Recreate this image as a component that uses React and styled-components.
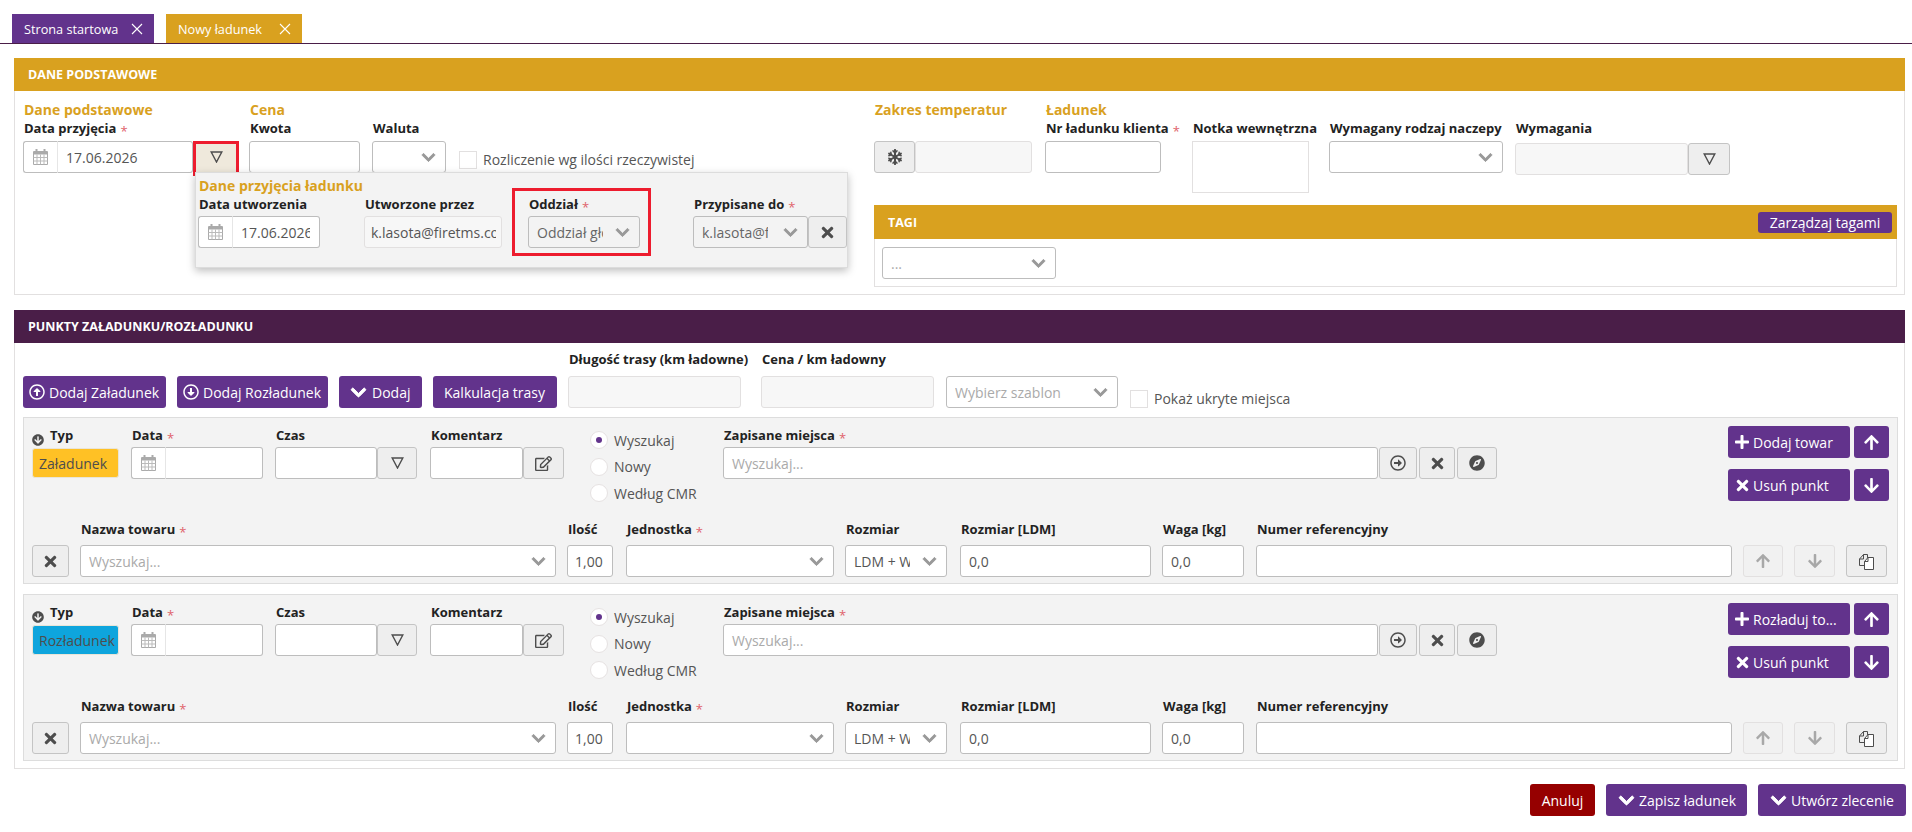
import styled, { createGlobalStyle } from 'styled-components';
import {
  FaArrowCircleDown,
  FaArrowDown,
  FaArrowUp,
  FaChevronDown,
  FaCompass,
  FaPlus,
  FaRegArrowAltCircleDown,
  FaRegArrowAltCircleRight,
  FaRegArrowAltCircleUp,
  FaRegEdit,
  FaSnowflake,
  FaTimes,
} from 'react-icons/fa';

const PURPLE = '#62338c';
const GOLD = '#d9a11f';

const GlobalStyle = createGlobalStyle`
  html, body {
    margin: 0;
    background: #fff;
    font-family: 'Open Sans', sans-serif;
    font-size: 14px;
    color: #333;
  }
  * { box-sizing: border-box; }
`;

const Page = styled.div`
  width: 1912px;
  height: 832px;
  overflow: hidden;
  padding-top: 14px;
`;

const TabBar = styled.div`
  display: flex;
  height: 30px;
  gap: 12px;
  padding-left: 12px;
  border-bottom: 1px solid #4a1e48;
`;

const Tab = styled.div`
  display: flex;
  align-items: center;
  justify-content: space-between;
  width: ${(p) => p.$w}px;
  height: 29px;
  padding: 0 11px 0 12px;
  background: ${(p) => p.$bg};
  color: #fff;
  font-size: 12.7px;
`;

const Panel = styled.section`
  margin: ${(p) => p.$mt}px 7px 0 14px;
  border: 1px solid #e2e0e0;
  border-top: 0;
  height: ${(p) => p.$h}px;
`;

const PanelHead = styled.h2`
  display: flex;
  align-items: center;
  justify-content: space-between;
  margin: 0 -1px;
  height: ${(p) => p.$h || 33}px;
  padding: 0 5px 0 14px;
  background: ${(p) => p.$bg};
  color: #fff;
  font-size: 12.5px;
  font-weight: 700;
`;

const TopBody = styled.div`
  display: flex;
  align-items: flex-start;
  position: relative;
  padding: 10px 7px 0 8px;
`;

const Block = styled.div`
  flex: none;
  margin-left: ${(p) => p.$ml || 0}px;
  width: ${(p) => p.$w}px;
`;

const RightBlock = styled(Block)`
  margin-left: auto;
`;

const Row = styled.div`
  display: flex;
  align-items: ${(p) => p.$align || 'flex-start'};
  margin-top: ${(p) => p.$mt || 0}px;
`;

const GroupTitle = styled.div`
  color: ${GOLD};
  font-size: 14px;
  font-weight: 700;
  line-height: 18px;
  height: 18px;
  margin-left: 1px;
`;

const Field = styled.div`
  flex: none;
  width: ${(p) => p.$w}px;
  margin-left: ${(p) => p.$ml || 0}px;
  margin-top: ${(p) => p.$mt || 0}px;
`;

const Label = styled.label`
  display: block;
  height: ${(p) => p.$h || 21}px;
  margin-left: 1px;
  color: #222;
  font-size: 13px;
  font-weight: 700;
  line-height: 18px;
  white-space: nowrap;
  ${(p) => p.$required && `
    &::after {
      content: '*';
      display: inline-block;
      margin-left: 4px;
      color: #e0636b;
      font-weight: 400;
      font-size: 13px;
      transform: translateY(3px);
    }
  `}
`;

const InputGroup = styled.div`
  display: flex;
  height: 32px;
  width: 100%;
`;

const Input = styled.div`
  display: flex;
  align-items: center;
  flex: 1;
  min-width: 0;
  height: 32px;
  padding: 0 ${(p) => p.$pr ?? 7}px 0 ${(p) => p.$pl ?? 8}px;
  overflow: hidden;
  white-space: nowrap;
  background: ${(p) => (p.$disabled ? '#f7f7f7' : '#fff')};
  border: 1px solid ${(p) => (p.$disabled ? '#e2e0e0' : '#bdbdbd')};
  border-radius: 3px;
  font-size: 14px;
  color: #555;
`;

const Area = styled.div`
  width: 100%;
  height: 52px;
  background: #fff;
  border: 1px solid #e2e0e0;
`;

const Addon = styled.div`
  display: flex;
  flex: none;
  align-items: center;
  justify-content: center;
  width: 35px;
  height: 100%;
  background: #fff;
  border: 1px solid #bdbdbd;
  border-right-color: #e6e6e6;
  border-radius: 3px 0 0 3px;
`;

const GroupInput = styled(Input)`
  height: 100%;
  border-left: 0;
  border-radius: 0 3px 3px 0;
`;

const SelectBox = styled(Input)`
  justify-content: space-between;
  background: ${(p) => (p.$muted ? '#f3f3f3' : '#fff')};
  color: ${(p) => (p.$muted ? '#666' : '#555')};
`;

const Clip = styled.span`
  display: block;
  overflow: hidden;
  min-width: 0;
  width: ${(p) => (p.$w ? `${p.$w}px` : 'auto')};
`;

const Placeholder = styled.span`
  color: #aaa;
`;

const Caret = styled(FaChevronDown)`
  flex: none;
  color: #999;
  font-size: 15px;
  margin-right: 2px;
  stroke: currentColor;
  stroke-width: 30;
`;

const IconButton = styled.div`
  display: flex;
  flex: none;
  align-items: center;
  justify-content: center;
  width: ${(p) => p.$w || 40}px;
  height: 32px;
  margin-left: ${(p) => p.$ml || 0}px;
  background: ${(p) => (p.$disabled ? '#f1f1f1' : '#eeeeee')};
  border: 1px solid ${(p) => (p.$disabled ? '#e2e0e0' : '#c4c4c4')};
  border-radius: 3px;
  color: ${(p) => (p.$disabled ? '#a8a8a8' : '#4d4d4d')};
  font-size: ${(p) => p.$fs || 16}px;
`;

const FlagButton = styled(IconButton)`
  position: relative;
  background: #efe9dc;
  &::after {
    content: '';
    position: absolute;
    inset: -1px -1px -4px -1px;
    border: 3px solid #ed1c2e;
  }
`;

const TriangleIcon = () => (
  <svg width="13" height="12" viewBox="0 0 13 12">
    <path d="M1.2 1h10.6L6.5 11z" fill="none" stroke="#4d4d4d" strokeWidth="1.4" />
  </svg>
);

const CalendarIcon = () => (
  <svg width="15" height="16" viewBox="0 0 15 16">
    <path d="M3.5 0v3M11.5 0v3" stroke="#aaa" strokeWidth="2" />
    <path d="M.5 2.5h14v13H.5z" fill="#fff" stroke="#aaa" />
    <path d="M.5 3h14v2.5H.5z" fill="#aaa" />
    <path d="M4 5.5v10M7.5 5.5v10M11 5.5v10M.5 8.5h14M.5 12h14" stroke="#bbb" />
  </svg>
);

const CopyIcon = () => (
  <svg width="17" height="17" viewBox="0 0 17 17" fill="none" stroke="#4d4d4d">
    <path d="M6 12.5H1.5V6l4-4.5h4v3.5" />
    <path d="M5.5 1.5V6h-4" />
    <path d="M6.5 8.5l3.5-4h5.5v12h-9z" fill="#fff" />
    <path d="M10 4.5v4H6.5" />
  </svg>
);

const CloseIcon = () => (
  <svg width="12" height="12" viewBox="0 0 12 12">
    <path d="M1 1l10 10M11 1L1 11" stroke="#fff" strokeWidth="1.1" />
  </svg>
);

const PurpleButton = styled.div`
  display: flex;
  flex: none;
  align-items: center;
  gap: ${(p) => p.$gap ?? 4}px;
  justify-content: ${(p) => (p.$center ? 'center' : 'flex-start')};
  width: ${(p) => (p.$w ? `${p.$w}px` : 'auto')};
  height: ${(p) => p.$h || 32}px;
  margin-left: ${(p) => p.$ml || 0}px;
  padding: 0 ${(p) => (p.$center ? 0 : p.$pad ?? 6)}px;
  background: ${(p) => p.$bg || PURPLE};
  border-radius: 3px;
  color: #fff;
  font-size: 14px;
  font-weight: 400;
  white-space: nowrap;
  svg { flex: none; font-size: ${(p) => p.$fs || 16}px; }
`;

const BoldChevron = styled(FaChevronDown)`
  stroke: currentColor;
  stroke-width: 30;
`;

const Check = styled.span`
  display: block;
  flex: none;
  width: 18px;
  height: 18px;
  background: #fff;
  border: 1px solid #e2e0e0;
`;

const CheckRow = styled.div`
  display: flex;
  align-items: center;
  gap: 6px;
  margin-left: ${(p) => p.$ml}px;
  margin-top: ${(p) => p.$mt}px;
  color: #555;
  font-size: 14px;
  white-space: nowrap;
`;

const Popover = styled.div`
  position: absolute;
  left: 180px;
  top: 81px;
  width: 653px;
  height: 96px;
  padding: 4px 0 0 2px;
  background: #f3f3f3;
  border: 1px solid #dcdcdc;
  box-shadow: 0 3px 8px rgba(0, 0, 0, 0.25);
`;

const RedBox = styled.div`
  position: absolute;
  left: 316px;
  top: 15px;
  width: 139px;
  height: 68px;
  border: 3px solid #ed1c2e;
  pointer-events: none;
`;

const TagsBox = styled.div`
  margin-top: 12px;
  height: 82px;
  border: 1px solid #e2e0e0;
  border-top: 0;
`;

const TagsBody = styled.div`
  width: 181px;
  padding: 8px 0 0 7px;
`;

const Toolbar = styled.div`
  display: flex;
  align-items: flex-end;
  height: 65px;
  padding-left: 8px;
`;

const Card = styled.div`
  margin: ${(p) => p.$mt}px 7px 0 8px;
  width: 1875px;
  height: 167px;
  padding: 8px 0 0 8px;
  background: #f3f3f3;
  border: 1px solid #dddddd;
`;

const TypeHead = styled.div`
  display: flex;
  align-items: flex-start;
  gap: 6px;
  height: 22px;
  color: #222;
  font-size: 13px;
  font-weight: 700;
  line-height: 18px;
  svg { flex: none; font-size: 12px; color: #4d4d4d; margin-top: 8px; }
`;

const TypeBadge = styled.div`
  display: flex;
  align-items: center;
  width: 87px;
  height: 30px;
  padding-left: 6px;
  background: ${(p) => p.$bg};
  border: 1px solid #e9e5d8;
  border-radius: 3px;
  color: #4d4d4d;
  font-size: 14px;
  white-space: nowrap;
  overflow: hidden;
`;

const Radios = styled.div`
  display: flex;
  flex-direction: column;
  flex: none;
  gap: 8.5px;
  width: 133px;
  margin-left: 26px;
  margin-top: 5px;
`;

const RadioRow = styled.div`
  display: flex;
  align-items: center;
  gap: 6px;
  height: 18px;
  color: #555;
  font-size: 14px;
  white-space: nowrap;
`;

const RadioDot = styled.span`
  display: flex;
  align-items: center;
  justify-content: center;
  width: 18px;
  height: 18px;
  background: #fff;
  border: 1px solid #e6e2e2;
  border-radius: 50%;
  &::after {
    content: '';
    display: ${(p) => (p.$on ? 'block' : 'none')};
    width: 6px;
    height: 6px;
    border-radius: 50%;
    background: ${PURPLE};
  }
`;

const ActionGrid = styled.div`
  display: grid;
  grid-template-columns: 122px 35px;
  grid-auto-rows: 32px;
  column-gap: 4px;
  row-gap: 11px;
  margin-left: 231px;
`;

const Footer = styled.div`
  display: flex;
  justify-content: flex-end;
  gap: 11px;
  margin-top: 15px;
  padding-right: 6px;
`;

const Select = ({ children, muted, clip }) => (
  <SelectBox $muted={muted}>
    <Clip $w={clip}>{children}</Clip>
    <Caret />
  </SelectBox>
);

const PointCard = ({ mt, badge, badgeColor, addLabel }) => (
  <Card $mt={mt}>
    <Row>
      <Field $w={87}>
        <TypeHead><FaArrowCircleDown />Typ</TypeHead>
        <TypeBadge $bg={badgeColor}>{badge}</TypeBadge>
      </Field>
      <Field $w={132} $ml={12}>
        <Label $required>Data</Label>
        <InputGroup>
          <Addon><CalendarIcon /></Addon>
          <GroupInput />
        </InputGroup>
      </Field>
      <Field $w={142} $ml={12}>
        <Label>Czas</Label>
        <InputGroup>
          <Input />
          <IconButton><TriangleIcon /></IconButton>
        </InputGroup>
      </Field>
      <Field $w={134} $ml={13}>
        <Label>Komentarz</Label>
        <InputGroup>
          <Input />
          <IconButton $w={41} $fs={17}><FaRegEdit /></IconButton>
        </InputGroup>
      </Field>
      <Radios>
        <RadioRow><RadioDot $on />Wyszukaj</RadioRow>
        <RadioRow><RadioDot />Nowy</RadioRow>
        <RadioRow><RadioDot />Według CMR</RadioRow>
      </Radios>
      <Field $w={774}>
        <Label $required>Zapisane miejsca</Label>
        <InputGroup>
          <Input><Placeholder>Wyszukaj...</Placeholder></Input>
          <IconButton $w={38} $ml={1}><FaRegArrowAltCircleRight /></IconButton>
          <IconButton $w={36} $ml={2} $fs={17}><FaTimes /></IconButton>
          <IconButton $w={40} $ml={2}><FaCompass /></IconButton>
        </InputGroup>
      </Field>
      <ActionGrid>
        <PurpleButton $gap={3}><FaPlus />{addLabel}</PurpleButton>
        <PurpleButton $center $fs={17}><FaArrowUp /></PurpleButton>
        <PurpleButton $gap={2} $fs={17}><FaTimes />Usuń punkt</PurpleButton>
        <PurpleButton $center $fs={17}><FaArrowDown /></PurpleButton>
      </ActionGrid>
    </Row>
    <Row $mt={18} $align="flex-end">
      <IconButton $w={37} $fs={17}><FaTimes /></IconButton>
      <Field $w={476} $ml={11}>
        <Label $h={25} $required>Nazwa towaru</Label>
        <Select><Placeholder>Wyszukaj...</Placeholder></Select>
      </Field>
      <Field $w={46} $ml={11}>
        <Label $h={25}>Ilość</Label>
        <Input $pl={7}>1,00</Input>
      </Field>
      <Field $w={208} $ml={13}>
        <Label $h={25} $required>Jednostka</Label>
        <Select />
      </Field>
      <Field $w={102} $ml={11}>
        <Label $h={25}>Rozmiar</Label>
        <Select clip={56}>LDM + WAGA</Select>
      </Field>
      <Field $w={191} $ml={13}>
        <Label $h={25}>Rozmiar [LDM]</Label>
        <Input>0,0</Input>
      </Field>
      <Field $w={82} $ml={11}>
        <Label $h={25}>Waga [kg]</Label>
        <Input>0,0</Input>
      </Field>
      <Field $w={476} $ml={12}>
        <Label $h={25}>Numer referencyjny</Label>
        <Input />
      </Field>
      <IconButton $w={40} $ml={11} $disabled><FaArrowUp /></IconButton>
      <IconButton $w={41} $ml={11} $disabled><FaArrowDown /></IconButton>
      <IconButton $w={41} $ml={11}><CopyIcon /></IconButton>
    </Row>
  </Card>
);

const App = () => (
  <Page>
    <GlobalStyle />
    <TabBar>
      <Tab $w={142} $bg={PURPLE}>Strona startowa<CloseIcon /></Tab>
      <Tab $w={136} $bg={GOLD}>Nowy ładunek<CloseIcon /></Tab>
    </TabBar>

    <Panel $mt={14} $h={237}>
      <PanelHead $bg={GOLD}>DANE PODSTAWOWE</PanelHead>
      <TopBody>
        <Block $w={216}>
          <GroupTitle>Dane podstawowe</GroupTitle>
          <Label $h={22} $required>Data przyjęcia</Label>
          <InputGroup>
            <Addon><CalendarIcon /></Addon>
            <GroupInput>17.06.2026</GroupInput>
            <FlagButton $w={46}><TriangleIcon /></FlagButton>
          </InputGroup>
        </Block>
        <Block $ml={10} $w={111}>
          <GroupTitle>Cena</GroupTitle>
          <Label $h={22}>Kwota</Label>
          <Input />
        </Block>
        <Block $ml={12} $w={74}>
          <GroupTitle />
          <Label $h={22}>Waluta</Label>
          <Select />
        </Block>
        <CheckRow $ml={13} $mt={49}><Check />Rozliczenie wg ilości rzeczywistej</CheckRow>

        <RightBlock $w={1023}>
          <Row>
            <Block $w={171}><GroupTitle>Zakres temperatur</GroupTitle></Block>
            <GroupTitle>Ładunek</GroupTitle>
          </Row>
          <Row>
            <Field $w={158} $mt={22}>
              <InputGroup>
                <IconButton $w={41}><FaSnowflake /></IconButton>
                <Input $disabled />
              </InputGroup>
            </Field>
            <Field $w={116} $ml={13}>
              <Label $h={22} $required>Nr ładunku klienta</Label>
              <Input />
            </Field>
            <Field $w={117} $ml={31}>
              <Label $h={22}>Notka wewnętrzna</Label>
              <Area />
            </Field>
            <Field $w={174} $ml={20}>
              <Label $h={22}>Wymagany rodzaj naczepy</Label>
              <Select />
            </Field>
            <Field $w={215} $ml={12}>
              <Label $h={24}>Wymagania</Label>
              <InputGroup>
                <Input $disabled />
                <IconButton $w={42}><TriangleIcon /></IconButton>
              </InputGroup>
            </Field>
          </Row>
          <TagsBox>
            <PanelHead $h={34} $bg={GOLD}>
              TAGI
              <PurpleButton $w={134} $h={21} $center>Zarządzaj tagami</PurpleButton>
            </PanelHead>
            <TagsBody>
              <Select><Placeholder>...</Placeholder></Select>
            </TagsBody>
          </TagsBox>
        </RightBlock>

        <Popover>
          <GroupTitle>Dane przyjęcia ładunku</GroupTitle>
          <Row $align="flex-end">
            <Field $w={122}>
              <Label>Data utworzenia</Label>
              <InputGroup>
                <Addon><CalendarIcon /></Addon>
                <GroupInput><Clip $w={69}>17.06.2026</Clip></GroupInput>
              </InputGroup>
            </Field>
            <Field $w={138} $ml={44}>
              <Label>Utworzone przez</Label>
              <Input $disabled $pl={6} $pr={5}><Clip $w={125}>k.lasota@firetms.com</Clip></Input>
            </Field>
            <Field $w={112} $ml={26}>
              <Label $required>Oddział</Label>
              <Select muted clip={66}>Oddział główny</Select>
            </Field>
            <Field $w={115} $ml={53}>
              <Label $required>Przypisane do</Label>
              <Select muted clip={66}>k.lasota@firetms.com</Select>
            </Field>
            <IconButton $w={39} $fs={17}><FaTimes /></IconButton>
          </Row>
          <RedBox />
        </Popover>
      </TopBody>
    </Panel>

    <Panel $mt={15} $h={459}>
      <PanelHead $bg="#4a1e48">PUNKTY ZAŁADUNKU/ROZŁADUNKU</PanelHead>
      <Toolbar>
        <PurpleButton $w={143}><FaRegArrowAltCircleUp />Dodaj Załadunek</PurpleButton>
        <PurpleButton $w={151} $ml={11}><FaRegArrowAltCircleDown />Dodaj Rozładunek</PurpleButton>
        <PurpleButton $w={83} $ml={11} $pad={11} $fs={17} $gap={5}><BoldChevron />Dodaj</PurpleButton>
        <PurpleButton $w={124} $ml={11} $pad={11}>Kalkulacja trasy</PurpleButton>
        <Field $w={173} $ml={11}>
          <Label $h={26}>Długość trasy (km ładowne)</Label>
          <Input $disabled />
        </Field>
        <Field $w={173} $ml={20}>
          <Label $h={26}>Cena / km ładowny</Label>
          <Input $disabled />
        </Field>
        <Field $w={172} $ml={12}>
          <Select><Placeholder>Wybierz szablon</Placeholder></Select>
        </Field>
        <CheckRow $ml={12} $mt={0}><Check />Pokaż ukryte miejsca</CheckRow>
      </Toolbar>
      <PointCard mt={9} badge="Załadunek" badgeColor="#ffc125" addLabel="Dodaj towar" />
      <PointCard mt={10} badge="Rozładunek" badgeColor="#0ea5dd" addLabel="Rozładuj to..." />
    </Panel>

    <Footer>
      <PurpleButton $w={65} $bg="#960000" $center>Anuluj</PurpleButton>
      <PurpleButton $w={141} $pad={12} $fs={17}><BoldChevron />Zapisz ładunek</PurpleButton>
      <PurpleButton $w={148} $pad={12} $fs={17}><BoldChevron />Utwórz zlecenie</PurpleButton>
    </Footer>
  </Page>
);

export default App;
